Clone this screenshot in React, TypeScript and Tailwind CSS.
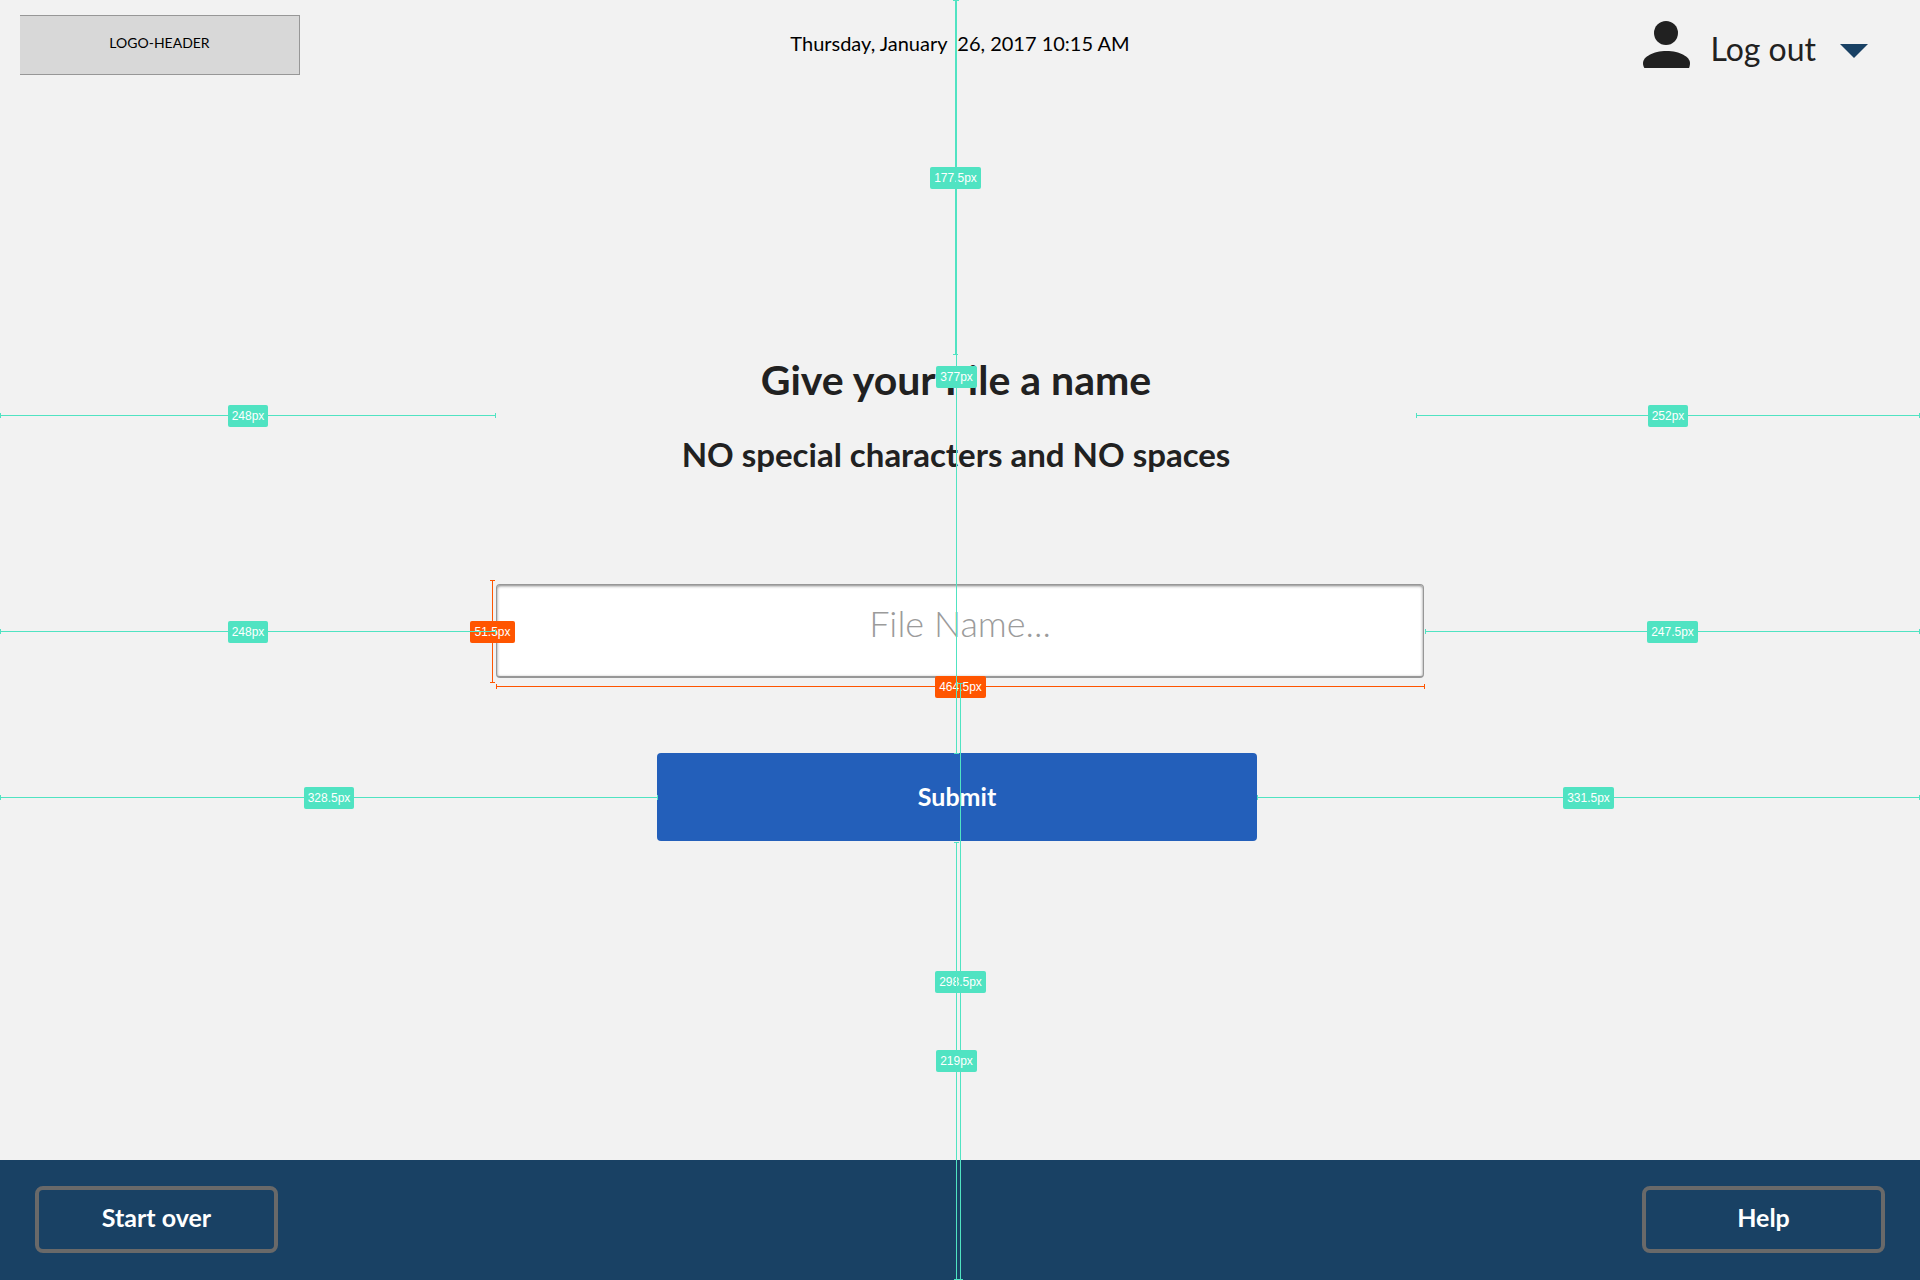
import React from "react";

type GuideProps = {
  label: string;
  className: string;
  axis: "x" | "y";
  tone?: "mint" | "orange";
};

function Guide({ label, className, axis, tone = "mint" }: GuideProps) {
  const border = tone === "mint" ? "border-[#50e3c2]" : "border-[#ff5500]";
  const fill = tone === "mint" ? "bg-[#50e3c2]" : "bg-[#ff5500]";
  const caps = axis === "x" ? "h-[5px] border-x" : "w-[5px] border-y";
  const line = axis === "x" ? "inset-x-0 top-[2px] h-px" : "inset-y-0 left-[2px] w-px";
  return (
    <div className={`absolute flex items-center justify-center ${caps} ${border} ${className}`}>
      <div className={`absolute ${line} ${fill}`} />
      <span
        className={`relative shrink-0 rounded-xs px-1 font-['Liberation_Sans',sans-serif] text-xs leading-[22px] whitespace-nowrap text-white ${fill}`}
      >
        {label}
      </span>
    </div>
  );
}

function Guides() {
  return (
    <div className="pointer-events-none absolute inset-0 overflow-hidden">
      <Guide axis="y" tone="orange" label="51.5px" className="top-[580px] left-[calc(50%-470px)] h-[103px]" />
      <Guide axis="x" tone="orange" label="464.5px" className="top-[684px] left-[calc(50%-464px)] right-[calc(50%-465px)]" />

      <Guide axis="x" label="248px" className="top-[413px] left-0 right-[calc(50%+464px)]" />
      <Guide axis="x" label="252px" className="top-[413px] left-[calc(50%+456px)] right-0" />
      <Guide axis="x" label="248px" className="top-[629px] left-0 right-[calc(50%+464px)]" />
      <Guide axis="x" label="247.5px" className="top-[629px] left-[calc(50%+465px)] right-0" />
      <Guide axis="x" label="328.5px" className="top-[795px] left-0 right-[calc(50%+302px)]" />
      <Guide axis="x" label="331.5px" className="top-[795px] left-[calc(50%+297px)] right-0" />

      <Guide axis="y" label="177.5px" className="top-0 left-[calc(50%-7px)] h-[355px]" />
      <Guide axis="y" label="298.5px" className="top-[683px] bottom-0 left-[calc(50%-2px)]" />
      <Guide axis="y" label="377px" className="top-0 left-[calc(50%-6px)] h-[754px]" />
      <Guide axis="y" label="219px" className="top-[842px] bottom-0 left-[calc(50%-6px)]" />
    </div>
  );
}

function UserIcon() {
  return (
    <svg viewBox="0 0 47 47" className="size-[47px]" fill="#212121" aria-hidden="true">
      <circle cx="23" cy="12" r="12" />
      <path d="M0 42C0 36 10 30 23.5 30S47 36 47 42C47 44 46.6 45.8 46 47H1.4C.5 45.8 0 44 0 42Z" />
    </svg>
  );
}

export default function App() {
  return (
    <div className="relative flex min-h-screen flex-col bg-[#f2f2f2] font-['Lato',sans-serif] text-[#212121]">
      <header className="grid grid-cols-[1fr_auto_1fr] items-center px-5 py-[15px]">
        <div className="flex h-[60px] w-[280px] items-center justify-center border-y border-r border-[#979797] bg-[#d8d8d8] pb-1 text-sm text-black">
          LOGO-HEADER
        </div>
        <time dateTime="2017-01-26T10:15" className="pb-1 text-xl whitespace-pre text-black">
          {"Thursday, January  26, 2017 10:15 AM"}
        </time>
        <button type="button" className="mr-8 flex items-start gap-5 justify-self-end">
          <UserIcon />
          <span className="flex items-center gap-6 pt-2 text-[32px] leading-10">
            Log out
            <svg viewBox="0 0 28 14" className="mt-1 h-[14px] w-7" fill="#194164" aria-hidden="true">
              <path d="M0 0H28L14 14Z" />
            </svg>
          </span>
        </button>
      </header>

      <main className="flex-1 pt-[266px]">
        <form className="mx-auto w-full max-w-[928px]" onSubmit={(e) => e.preventDefault()}>
          <div className="pr-2 text-center font-bold">
            <h1 className="text-[41px] leading-[48px]">Give your File a name</h1>
            <p className="mt-[30px] text-[33px] leading-10">NO special characters and NO spaces</p>
          </div>
          <input
            type="text"
            aria-label="File name"
            placeholder="File Name..."
            className="mt-[110px] block h-[94px] w-full rounded-sm border border-b-2 border-[#979797] bg-white px-6 pb-4 text-center text-4xl font-light shadow-[inset_0_1px_3px_rgba(0,0,0,0.5)] outline-none placeholder:text-[#9b9b9b] placeholder:opacity-100"
          />
          <div className="mt-[75px] flex justify-center pr-1.5">
            <button type="submit" className="h-[88px] w-[600px] rounded-sm bg-[#235fba] text-[25px] font-bold text-white">
              Submit
            </button>
          </div>
        </form>
      </main>

      <footer className="flex h-[120px] items-center justify-between bg-[#194164] px-[35px] pb-0.5 text-[25px] font-bold text-white">
        <button type="button" className="h-[67px] w-[243px] rounded-lg border-4 border-[#696969] pb-0.5">
          Start over
        </button>
        <button type="button" className="h-[67px] w-[243px] rounded-lg border-4 border-[#696969] pb-0.5">
          Help
        </button>
      </footer>

      <Guides />
    </div>
  );
}
